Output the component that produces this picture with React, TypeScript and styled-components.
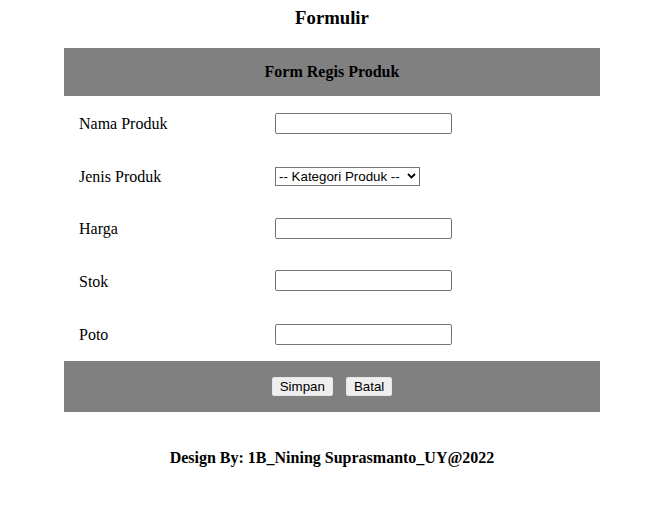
import React from "react";
import styled, { createGlobalStyle } from "styled-components";

const Global = createGlobalStyle`
  html, body { margin: 0; padding: 0; background: #fff; }
  body { font-family: "Liberation Serif", "Times New Roman", serif; color: #000; }
`;

const Page = styled.div`
  width: 536px;
  margin-left: 64px;
  display: flex;
  flex-direction: column;
`;

const Title = styled.h3`
  margin: 0;
  height: 35px;
  display: flex;
  align-items: center;
  justify-content: center;
  font-size: 18.72px;
  font-weight: bold;
  padding-bottom: 13px;
`;

const Bar = styled.div<{ $h: number }>`
  background: #808080;
  height: ${(p) => p.$h}px;
  display: flex;
  align-items: center;
  justify-content: center;
  gap: 13px;
`;

const BarTitle = styled.span`
  font-size: 16px;
  font-weight: bold;
`;

const Row = styled.div<{ $h: number }>`
  display: grid;
  grid-template-columns: 211px 1fr;
  align-items: center;
  height: ${(p) => p.$h}px;
`;

const Label = styled.div`
  padding-left: 15px;
  font-size: 16px;
  padding-top: 2px;
`;

const Input = styled.input`
  box-sizing: border-box;
  width: 177px;
  height: 21px;
  border: 1px solid #767676;
  border-radius: 2px;
  padding: 1px 2px;
  font: 13.333px "Liberation Sans", Arial, sans-serif;
  background: #fff;
`;

const SelectWrap = styled.div`
  position: relative;
  width: 145px;
  height: 19px;
`;

const Select = styled.select`
  appearance: none;
  box-sizing: border-box;
  width: 145px;
  height: 19px;
  border: 1px solid #767676;
  border-radius: 0;
  padding: 0 0 0 3px;
  font: 13.333px "Liberation Sans", Arial, sans-serif;
  color: #000;
  background: #fff;
`;

const Chevron = styled.svg`
  position: absolute;
  right: 4px;
  top: 6px;
  pointer-events: none;
`;

const Button = styled.button`
  box-sizing: border-box;
  height: 19px;
  padding: 0 7px;
  border: 1px solid #e6e6e6;
  border-radius: 2px;
  background: #efefef;
  font: 13.333px "Liberation Sans", Arial, sans-serif;
  color: #000;
`;

const Footer = styled.div`
  margin-top: 37px;
  text-align: center;
  font-size: 16px;
  font-weight: bold;
`;

export default function App() {
  return (
    <>
      <Global />
      <Page>
        <Title>Formulir</Title>
        <Bar $h={48}>
          <BarTitle>Form Regis Produk</BarTitle>
        </Bar>
        <Row $h={54}>
          <Label>Nama Produk</Label>
          <div><Input type="text" /></div>
        </Row>
        <Row $h={52}>
          <Label>Jenis Produk</Label>
          <SelectWrap>
            <Select defaultValue="">
              <option value="">-- Kategori Produk --</option>
            </Select>
            <Chevron width="9" height="6" viewBox="0 0 9 6">
              <path d="M1 1 L4.5 4.5 L8 1" fill="none" stroke="#000" strokeWidth="1.8" />
            </Chevron>
          </SelectWrap>
        </Row>
        <Row $h={52}>
          <Label>Harga</Label>
          <div><Input type="text" /></div>
        </Row>
        <Row $h={53}>
          <Label>Stok</Label>
          <div><Input type="text" /></div>
        </Row>
        <Row $h={54}>
          <Label>Poto</Label>
          <div><Input type="text" /></div>
        </Row>
        <Bar $h={51}>
          <Button>Simpan</Button>
          <Button>Batal</Button>
        </Bar>
        <Footer>Design By: 1B_Nining Suprasmanto_UY@2022</Footer>
      </Page>
    </>
  );
}
